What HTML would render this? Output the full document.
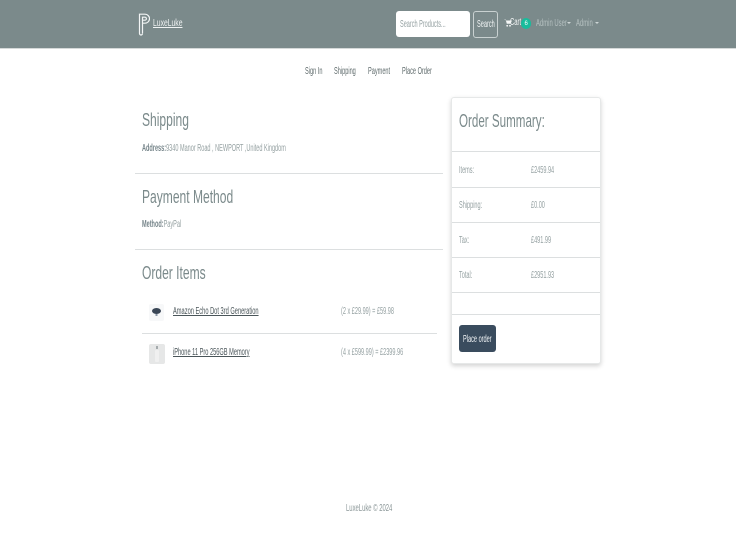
<!DOCTYPE html>
<html><head><meta charset="utf-8"><title>LuxeLuke</title>
<style>
html,body{margin:0;padding:0;background:#fff;width:736px;height:552px;overflow:hidden}
body{position:relative;font-family:"Liberation Sans",sans-serif;color:#7b8a8b}
.t{position:absolute;white-space:nowrap;transform-origin:0 0;line-height:1}
.n{font-size:10px;transform:scaleX(.56);color:#5f6b6c}
.h{font-size:18px;transform:scaleX(.67);color:#7b8a8b}
.s{font-size:10px;transform:scaleX(.555);color:#95a1a2}
.l{position:absolute;height:1px;background:#dcdfe0}
.w{color:#e4e9e9;font-size:10px;transform:scaleX(.59)}
</style></head><body>
<div style="position:absolute;left:0;top:0;width:736px;height:48px;background:#7b8a8b;border-bottom:1px solid #d5d9d9"></div>
<svg style="position:absolute;left:138px;top:13px" width="12" height="23" viewBox="0 0 12 23" fill="none" stroke="#f2f5f5" stroke-width="1.2"><path d="M1.5 20.5V1.2h5.5a4.5 4.5 0 0 1 0 9H4.5M4.5 20.2V4.2h2.4a1.5 1.5 0 0 1 0 3H4.5M1.5 20.5a1.5 1.5 0 0 0 3 0"/></svg>
<span class="t" style="left:153px;top:18.5px;font-size:10px;transform:scaleX(.68);color:#f0f3f3;text-decoration:underline">LuxeLuke</span>
<div style="position:absolute;left:396px;top:11px;width:74px;height:26px;background:#fff;border-radius:3px"></div>
<span class="t s" style="left:400px;top:20px">Search Products...</span>
<div style="position:absolute;left:473px;top:11px;width:23px;height:25px;border:1px solid #c9d1d1;border-radius:3px"></div>
<span class="t w" style="left:477px;top:20px;color:#f2f5f5;transform:scaleX(.56)">Search</span>
<svg style="position:absolute;left:504px;top:19px" width="8" height="8" viewBox="0 0 8 8"><path d="M0 .5h1.6l1.2 4.2h3.7L8 1.5H2.2z" fill="#f4f6f6"/><circle cx="3.2" cy="6.8" r=".9" fill="#f4f6f6"/><circle cx="6" cy="6.8" r=".9" fill="#f4f6f6"/></svg>
<span class="t w" style="left:510px;top:18px;color:#f4f6f6">Cart</span>
<div style="position:absolute;left:521px;top:18px;width:10px;height:11px;border-radius:6px;background:#18bc9c"></div>
<span class="t" style="left:524.5px;top:20.5px;font-size:6px;color:#fff">6</span>
<span class="t w" style="left:536px;top:18.5px;color:#b5c0c0">Admin User</span>
<div style="position:absolute;left:567px;top:22px;border:2px solid transparent;border-top-color:#cdd5d5;border-bottom:0"></div>
<span class="t w" style="left:576px;top:18.5px;color:#b5c0c0">Admin</span>
<div style="position:absolute;left:595px;top:22px;border:2px solid transparent;border-top-color:#cdd5d5;border-bottom:0"></div>

<span class="t n" style="left:305px;top:67px">Sign In</span>
<span class="t n" style="left:334px;top:67px">Shipping</span>
<span class="t n" style="left:368px;top:67px">Payment</span>
<span class="t n" style="left:402px;top:67px">Place Order</span>

<span class="t h" style="left:142px;top:111px">Shipping</span>
<span class="t s" style="left:142px;top:143.5px"><b style="color:#76858a">Address:</b>9340 Manor Road , NEWPORT ,United Kingdom</span>
<div class="l" style="left:135px;top:173px;width:308px"></div>
<span class="t h" style="left:142px;top:188px">Payment Method</span>
<span class="t s" style="left:142px;top:220px"><b style="color:#76858a">Method:</b>PayPal</span>
<div class="l" style="left:135px;top:249px;width:308px"></div>
<span class="t h" style="left:142px;top:264px">Order Items</span>

<svg style="position:absolute;left:149px;top:304px" width="15" height="17" viewBox="0 0 15 17"><rect width="15" height="17" rx="2" fill="#f7f8f9"/><ellipse cx="7.5" cy="7" rx="4.5" ry="3" fill="#3a4656"/><rect x="6.5" y="10" width="2" height="2" fill="#8a96a6"/></svg>
<span class="t n" style="left:173px;top:307px;text-decoration:underline;color:#4a5559;transform:scaleX(.57)">Amazon Echo Dot 3rd Generation</span>
<span class="t s" style="left:341px;top:307px">(2 x £29.99) = £59.98</span>
<div class="l" style="left:142px;top:333px;width:295px"></div>
<svg style="position:absolute;left:149px;top:344px" width="16" height="20" viewBox="0 0 16 20"><rect width="16" height="20" rx="2" fill="#e6e7e7"/><rect x="6" y="6" width="4" height="12" rx="1" fill="#f0f0f0"/><rect x="7" y="2" width="2" height="3" fill="#a5abad"/></svg>
<span class="t n" style="left:173px;top:348px;text-decoration:underline;color:#4a5559;transform:scaleX(.565)">iPhone 11 Pro 256GB Memory</span>
<span class="t s" style="left:341px;top:348px">(4 x £599.99) = £2399.96</span>

<div style="position:absolute;left:451px;top:97px;width:148px;height:265px;border:1px solid #e6e8e8;border-radius:3px;box-shadow:0 2px 5px rgba(0,0,0,.18);background:#fff"></div>
<span class="t h" style="left:458.5px;top:112px;transform:scaleX(.645)">Order Summary:</span>
<div class="l" style="left:452px;top:151px;width:148px"></div>
<span class="t s" style="left:459px;top:166px">Items:</span><span class="t s" style="left:531px;top:166px">£2459.94</span>
<div class="l" style="left:452px;top:187px;width:148px"></div>
<span class="t s" style="left:459px;top:201px">Shipping:</span><span class="t s" style="left:531px;top:201px">£0.00</span>
<div class="l" style="left:452px;top:222px;width:148px"></div>
<span class="t s" style="left:459px;top:236px">Tax:</span><span class="t s" style="left:531px;top:236px">£491.99</span>
<div class="l" style="left:452px;top:257px;width:148px"></div>
<span class="t s" style="left:459px;top:271px">Total:</span><span class="t s" style="left:531px;top:271px">£2951.93</span>
<div class="l" style="left:452px;top:292px;width:148px"></div>
<div class="l" style="left:452px;top:314px;width:148px"></div>
<div style="position:absolute;left:459px;top:325px;width:37px;height:27px;background:#3a4c5e;border-radius:3px"></div>
<span class="t" style="left:463px;top:334.5px;font-size:10px;transform:scaleX(.56);color:#f2f5f7">Place order</span>

<span class="t s" style="left:346px;top:504px;color:#8a9697;transform:scaleX(.59)">LuxeLuke © 2024</span>
</body></html>
